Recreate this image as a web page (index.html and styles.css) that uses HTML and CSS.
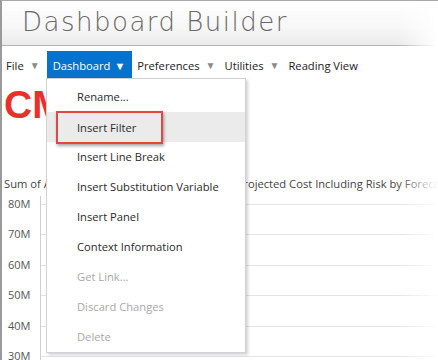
FILE: index.html
```html
<!DOCTYPE html>
<html lang="en">
<head>
    <meta charset="UTF-8">
    <title>Dashboard Builder</title>
    <link rel="stylesheet" href="styles.css">
</head>
<body>
  <div class="frame">
    <div class="app-header">
        <h1>Dashboard Builder</h1>
    </div>

    <div class="menu-bar">
        <span class="menu-item">File <span class="caret">&#9660;</span></span>
        <span class="menu-item active">Dashboard <span class="caret">&#9660;</span></span>
        <span class="menu-item">Preferences <span class="caret">&#9660;</span></span>
        <span class="menu-item">Utilities <span class="caret">&#9660;</span></span>
        <span class="menu-item">Reading View</span>
    </div>

    <div class="content">
        <div class="big-title">CM</div>

        <div class="chart">
            <div class="chart-title">Sum of Actual Cost, Forecast Cost by Month, Projected Cost Including Risk by Forecast</div>
            <div class="chart-body">
                <div class="axis-labels">
                    <span>80M</span>
                    <span>70M</span>
                    <span>60M</span>
                    <span>50M</span>
                    <span>40M</span>
                    <span>30M</span>
                </div>
                <div class="plot">
                    <div class="gridline"></div>
                    <div class="gridline"></div>
                    <div class="gridline"></div>
                    <div class="gridline"></div>
                    <div class="gridline"></div>
                    <div class="gridline"></div>
                </div>
            </div>
        </div>
    </div>

    <!-- dropdown for the Dashboard menu -->
    <ul class="dropdown">
        <li>Rename...</li>
        <li class="hover"><span class="callout">Insert Filter</span></li>
        <li>Insert Line Break</li>
        <li>Insert Substitution Variable</li>
        <li>Insert Panel</li>
        <li>Context Information</li>
        <li class="disabled">Get Link...</li>
        <li class="disabled">Discard Changes</li>
        <li class="disabled">Delete</li>
    </ul>

    <div class="fade-right"></div>
  </div>
</body>
</html>
```

FILE: styles.css
```css
body {
    margin: 0;
    background-color: #fff;
    font-family: "Open Sans", "Noto Sans", sans-serif;
    overflow: hidden;
}

.frame {
    position: relative;
    width: 436px;
    height: 359px;
    border-left: 2px solid #9a9a9a;
    border-top: 1px solid #a8a8a8;
    overflow: hidden;
}

.app-header {
    height: 44px;
    border-bottom: 1px solid #b4b4b4;
    background: linear-gradient(#ffffff, #f7f7f7 60%, #ebebeb);
}

.app-header h1 {
    margin: 0;
    padding: 4px 0 0 20px;
    font-family: "DejaVu Sans", sans-serif;
    font-weight: 200;
    font-size: 26px;
    letter-spacing: 1.5px;
    color: #686868;
    line-height: 34px;
}

.menu-bar {
    display: flex;
    align-items: center;
    height: 34px;
    padding-left: 4px;
    font-size: 11.2px;
    color: #222;
}

.menu-item {
    display: flex;
    align-items: center;
    height: 28px;
    padding: 0 4px 0 0;
    margin-right: 5px;
    margin-top: 4px;
}

.menu-item:first-child {
    padding-right: 0;
    margin-right: 7px;
}

.caret {
    font-size: 10px;
    color: #8a8a8a;
    margin-left: 6px;
}

.menu-item.active {
    background-color: #0572ce;
    color: #fff;
    padding: 0 7px 0 6px;
    margin-right: 5px;
}

.menu-item.active .caret {
    color: #fff;
    font-size: 11px;
    margin-left: 4px;
}

.content {
    padding-left: 2px;
}

.big-title {
    font-family: "Liberation Sans", Arial, sans-serif;
    font-weight: bold;
    font-size: 39px;
    color: #e8312d;
    line-height: 46px;
    margin-top: 2px;
}

.chart-title {
    margin-top: 48px;
    font-size: 11.2px;
    color: #444;
    white-space: nowrap;
    line-height: 16px;
}

.chart-body {
    display: flex;
    margin-top: 4px;
}

.axis-labels {
    display: flex;
    flex-direction: column;
    width: 32px;
    padding-left: 4px;
    font-size: 11px;
    color: #555;
}

.axis-labels span {
    height: 30.4px;
    line-height: 16px;
}

.plot {
    flex: 1;
    border-left: 1px solid #c9d0db;
    padding-top: 8px;
}

.gridline {
    height: 30.4px;
    box-sizing: border-box;
    border-top: 1px solid #e2e4e8;
}

/* dropdown sits over the page */
.dropdown {
    position: absolute;
    left: 44px;
    top: 77px;
    width: 198px;
    margin: 0;
    padding: 3px 0 0;
    list-style: none;
    background-color: #fff;
    border: 1px solid #d2d2d2;
    box-shadow: 2px 2px 3px rgba(0, 0, 0, 0.18);
    font-size: 11.2px;
    color: #2a2a2a;
}

.dropdown li {
    height: 30px;
    line-height: 30px;
    padding-left: 30px;
    white-space: nowrap;
}

.dropdown li.hover {
    display: flex;
    align-items: center;
    background-color: #ebebeb;
}

.dropdown li.disabled {
    color: #a8a8a8;
}

.callout {
    flex: none;
    margin-left: -21px;
    padding-left: 19px;
    width: 84px;
    height: 29px;
    line-height: 29px;
    border: 2px solid #e54545;
    box-shadow: 1px 2px 3px rgba(0, 0, 0, 0.35);
}

.fade-right {
    position: absolute;
    top: 0;
    right: 0;
    width: 40px;
    height: 100%;
    background: linear-gradient(to right, rgba(255, 255, 255, 0), #fff);
    pointer-events: none;
}
```
